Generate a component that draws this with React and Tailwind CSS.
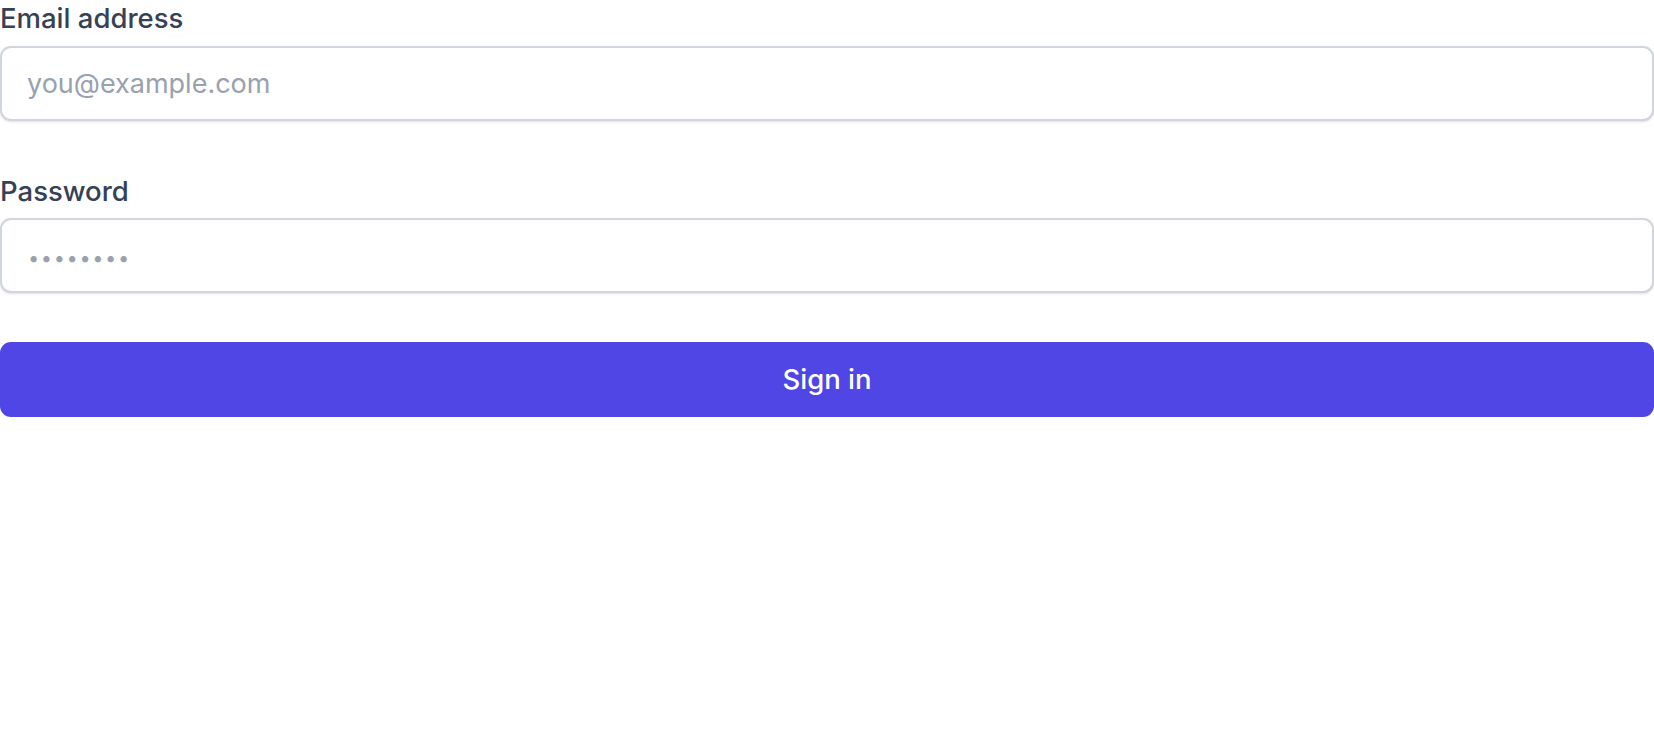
export default function App() {
  return (
    <div className="bg-white min-h-screen w-full" style={{ fontFamily: 'Inter, "Noto Sans", sans-serif' }}>
      <form className="w-full">
        {/* Email */}
        <div>
          <label htmlFor="email" className="block text-[27.5px] leading-[36px] font-medium text-gray-700">
            Email address
          </label>
          <input
            id="email"
            type="email"
            placeholder="you@example.com"
            className="mt-[10px] block h-[75px] w-full rounded-[11px] border-2 border-gray-300 bg-white px-[25px] text-[27px] text-gray-900 shadow-sm placeholder:text-gray-400 outline-none"
          />
        </div>

        {/* Password */}
        <div className="mt-[52px]">
          <label htmlFor="password" className="block text-[27.5px] leading-[36px] font-medium text-gray-700">
            Password
          </label>
          <input
            id="password"
            type="password"
            placeholder="••••••••"
            className="mt-[9px] block h-[75px] w-full rounded-[11px] border-2 border-gray-300 bg-white px-[26px] text-[27px] text-gray-900 shadow-sm placeholder:text-[20px] placeholder:tracking-[1.6px] placeholder:text-gray-400 outline-none"
          />
        </div>

        <button
          type="button"
          className="mt-[49px] flex h-[75px] w-full items-center justify-center rounded-[11px] bg-[#4f46e5] text-[27.5px] font-medium text-white"
        >
          Sign in
        </button>
      </form>
    </div>
  );
}
